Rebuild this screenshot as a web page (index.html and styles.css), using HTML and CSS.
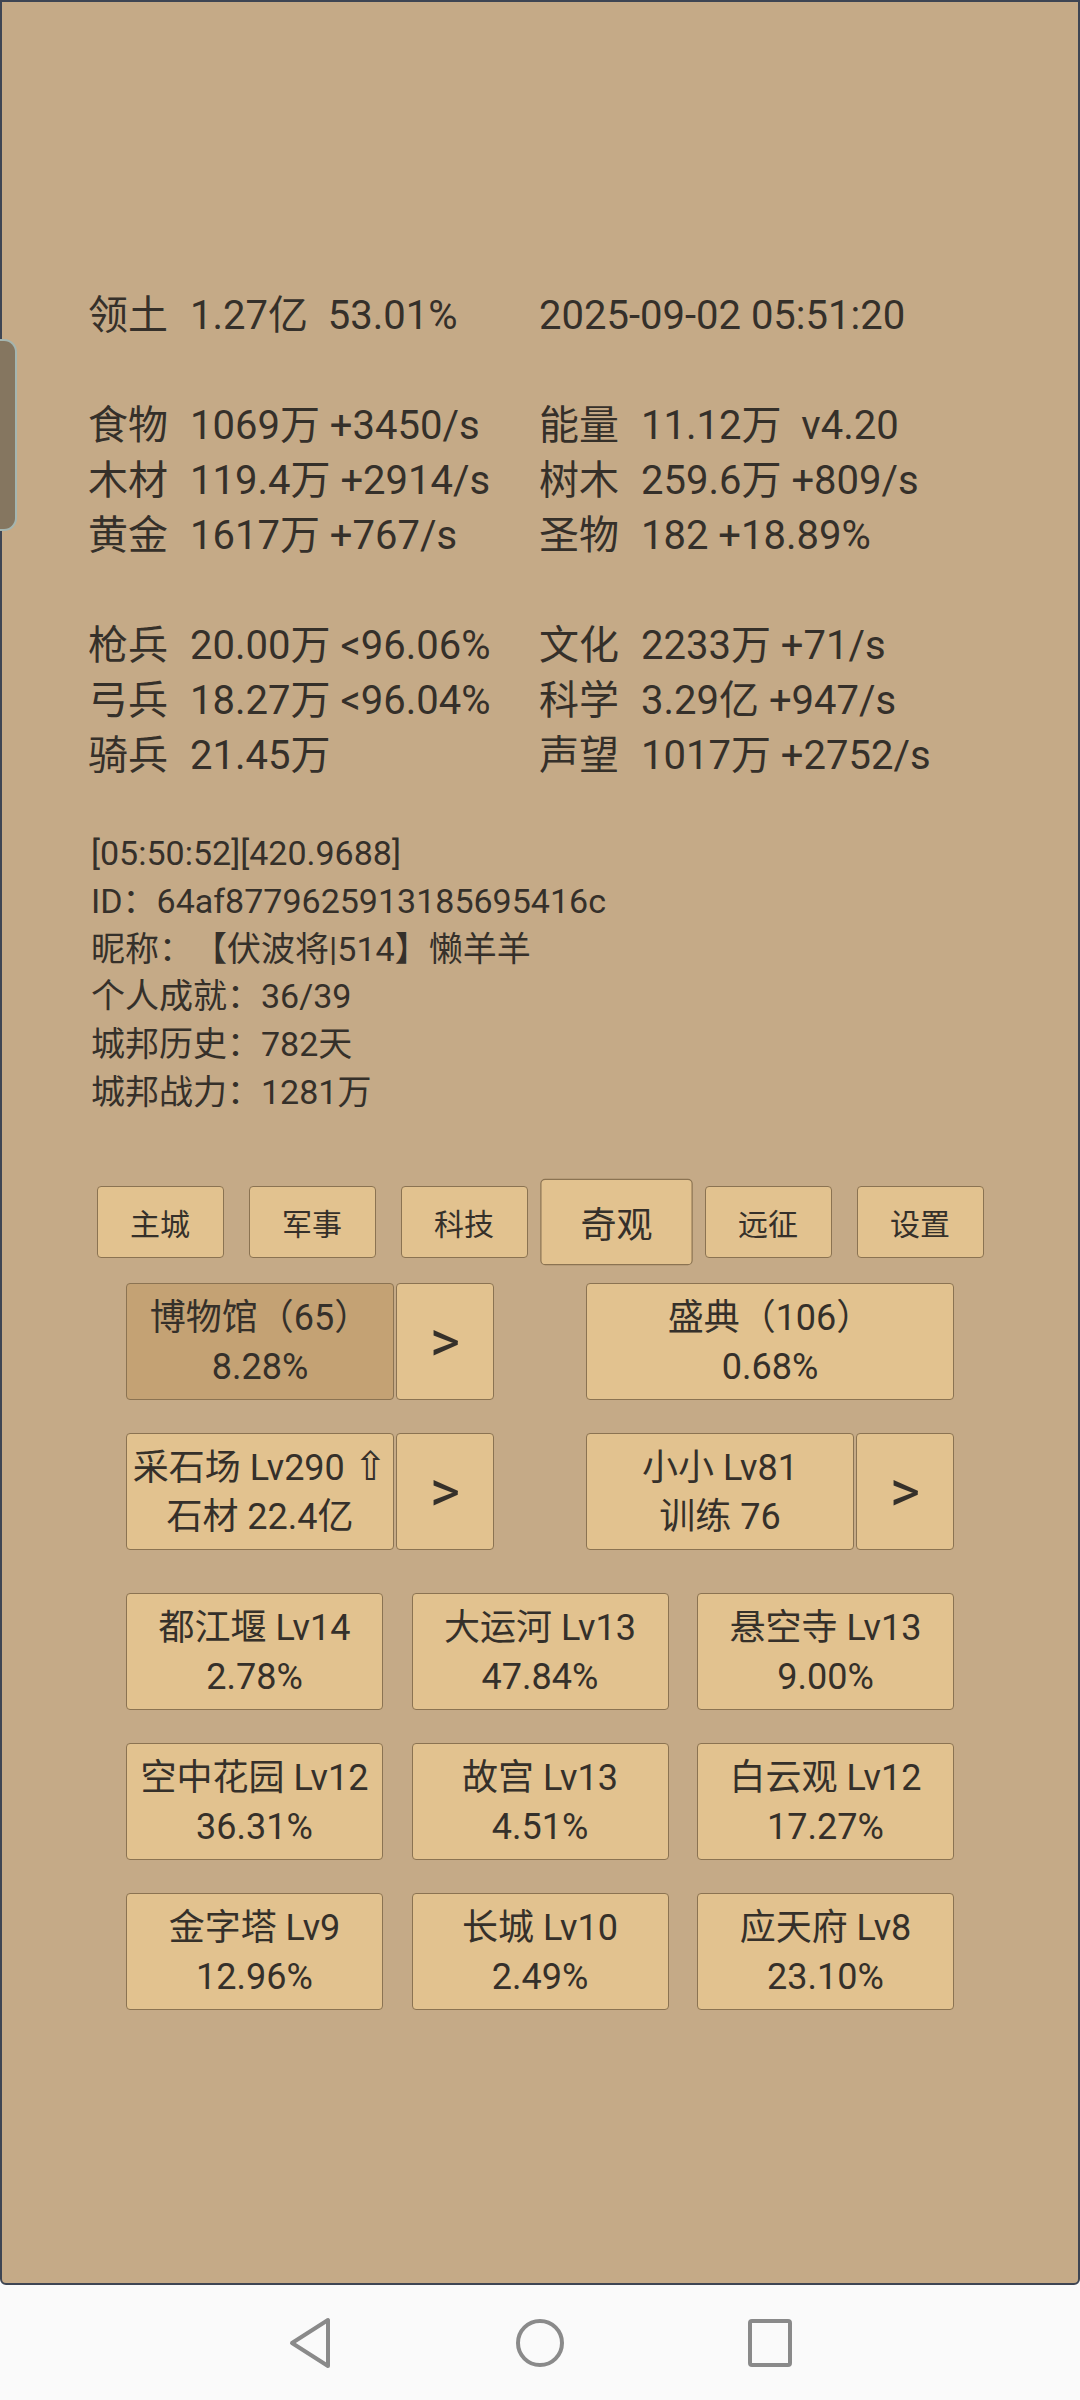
FILE: index.html
```html
<!DOCTYPE html>
<html lang="zh-CN">
<head>
  <meta charset="UTF-8">
  <meta name="viewport" content="width=device-width, initial-scale=1.0">
  <title>城邦</title>
  <link rel="stylesheet" href="styles.css">
</head>
<body>
  <div class="screen">
    <div class="edge-handle"></div>

    <div class="stats">
      <div class="stat-row"><div><span class="k">领土</span><span class="v">1.27亿  53.01%</span></div><div>2025-09-02 05:51:20</div></div>
      <div class="stat-row"></div>
      <div class="stat-row"><div><span class="k">食物</span><span class="v">1069万 +3450/s</span></div><div><span class="k">能量</span><span class="v">11.12万  v4.20</span></div></div>
      <div class="stat-row"><div><span class="k">木材</span><span class="v">119.4万 +2914/s</span></div><div><span class="k">树木</span><span class="v">259.6万 +809/s</span></div></div>
      <div class="stat-row"><div><span class="k">黄金</span><span class="v">1617万 +767/s</span></div><div><span class="k">圣物</span><span class="v">182 +18.89%</span></div></div>
      <div class="stat-row"></div>
      <div class="stat-row"><div><span class="k">枪兵</span><span class="v">20.00万 &lt;96.06%</span></div><div><span class="k">文化</span><span class="v">2233万 +71/s</span></div></div>
      <div class="stat-row"><div><span class="k">弓兵</span><span class="v">18.27万 &lt;96.04%</span></div><div><span class="k">科学</span><span class="v">3.29亿 +947/s</span></div></div>
      <div class="stat-row"><div><span class="k">骑兵</span><span class="v">21.45万</span></div><div><span class="k">声望</span><span class="v">1017万 +2752/s</span></div></div>
    </div>

    <div class="info">
      <div>[05:50:52][420.9688]</div>
      <div>ID：64af8779625913185695416c</div>
      <div>昵称：【伏波将|514】懒羊羊</div>
      <div>个人成就：36/39</div>
      <div>城邦历史：782天</div>
      <div>城邦战力：1281万</div>
    </div>

    <nav class="tabs">
      <button class="tab">主城</button>
      <button class="tab">军事</button>
      <button class="tab">科技</button>
      <button class="tab active">奇观</button>
      <button class="tab">远征</button>
      <button class="tab">设置</button>
    </nav>

    <div class="wonders">
      <div class="pair-row">
        <div class="pair">
          <button class="card main selected"><span>博物馆（65）</span><span>8.28%</span></button>
          <button class="card arrow">&gt;</button>
        </div>
        <div class="pair">
          <button class="card full"><span>盛典（106）</span><span>0.68%</span></button>
        </div>
      </div>
      <div class="pair-row">
        <div class="pair">
          <button class="card main"><span>采石场 Lv290 <span class="up">⇧</span></span><span>石材 22.4亿</span></button>
          <button class="card arrow">&gt;</button>
        </div>
        <div class="pair">
          <button class="card main"><span>小小 Lv81</span><span>训练 76</span></button>
          <button class="card arrow">&gt;</button>
        </div>
      </div>

      <div class="grid">
        <button class="card"><span>都江堰 Lv14</span><span>2.78%</span></button>
        <button class="card"><span>大运河 Lv13</span><span>47.84%</span></button>
        <button class="card"><span>悬空寺 Lv13</span><span>9.00%</span></button>
        <button class="card"><span>空中花园 Lv12</span><span>36.31%</span></button>
        <button class="card"><span>故宫 Lv13</span><span>4.51%</span></button>
        <button class="card"><span>白云观 Lv12</span><span>17.27%</span></button>
        <button class="card"><span>金字塔 Lv9</span><span>12.96%</span></button>
        <button class="card"><span>长城 Lv10</span><span>2.49%</span></button>
        <button class="card"><span>应天府 Lv8</span><span>23.10%</span></button>
      </div>
    </div>
  </div>

  <div class="navbar">
    <svg class="nav-icon" width="48" height="52" viewBox="0 0 48 52"><path d="M42 3 L42 49 L6 26 Z" fill="none" stroke="#8a8a8a" stroke-width="4" stroke-linejoin="round"/></svg>
    <svg class="nav-icon" width="48" height="52" viewBox="0 0 48 52"><circle cx="24" cy="26" r="22" fill="none" stroke="#8a8a8a" stroke-width="4"/></svg>
    <svg class="nav-icon" width="48" height="52" viewBox="0 0 48 52"><rect x="4" y="4" width="40" height="44" rx="2" fill="none" stroke="#8a8a8a" stroke-width="4"/></svg>
  </div>
</body>
</html>
```

FILE: styles.css
```css
body { margin: 0; background: #fafafa; font-family: Roboto, "Noto Sans CJK SC", sans-serif; color: #35302a; text-spacing-trim: space-all; }
.screen { position: relative; height: 2285px; box-sizing: border-box; border: 2px solid #3e4553; border-radius: 0 0 6px 6px; background: #c5aa87; padding-top: 286px; }
.edge-handle { position: absolute; left: -2px; top: 337px; width: 15px; height: 188px; background: #857660; border: 2px solid #a4b5b0; border-left: none; border-radius: 0 13px 13px 0; }

.stats { padding-left: 86px; font-size: 40px; line-height: 55px; }
.stat-row { display: grid; grid-template-columns: 451px 1fr; height: 55px; white-space: pre; }
.k { display: inline-block; width: 102px; }

.info { margin-top: 47px; padding-left: 89px; font-size: 34px; line-height: 47.8px; }

button { font-family: inherit; color: inherit; background: #e2c28f; border: 1.5px solid #8b7352; border-radius: 4px; padding: 0; cursor: pointer; }

.tabs { margin-top: 69px; display: flex; justify-content: center; gap: 25px; }
.tab { width: 127px; height: 72px; font-size: 30px; }
.tab.active { transform: scale(1.2); }

.wonders { width: 828px; margin: 25px auto 0; }
.pair-row { display: flex; justify-content: space-between; margin-bottom: 33px; }
.pair-row + .pair-row { margin-bottom: 43px; }
.pair { display: flex; gap: 2px; width: 368px; }
.card { height: 117px; display: flex; flex-direction: column; align-items: center; justify-content: center; padding-top: 3px; font-size: 36px; line-height: 49px; }
.card.main { width: 268px; }
.card.full { width: 368px; }
.card.arrow { width: 98px; font-size: 58px; padding-top: 0; }
.card.selected { background: #c4a274; }
.up { font-family: "DejaVu Sans", sans-serif; font-size: 40px; line-height: 40px; }

.grid { display: grid; grid-template-columns: repeat(3, 257px); justify-content: space-between; row-gap: 33px; }

.navbar { height: 115px; display: flex; align-items: center; justify-content: center; gap: 182px; }
.nav-icon { display: block; }
```
